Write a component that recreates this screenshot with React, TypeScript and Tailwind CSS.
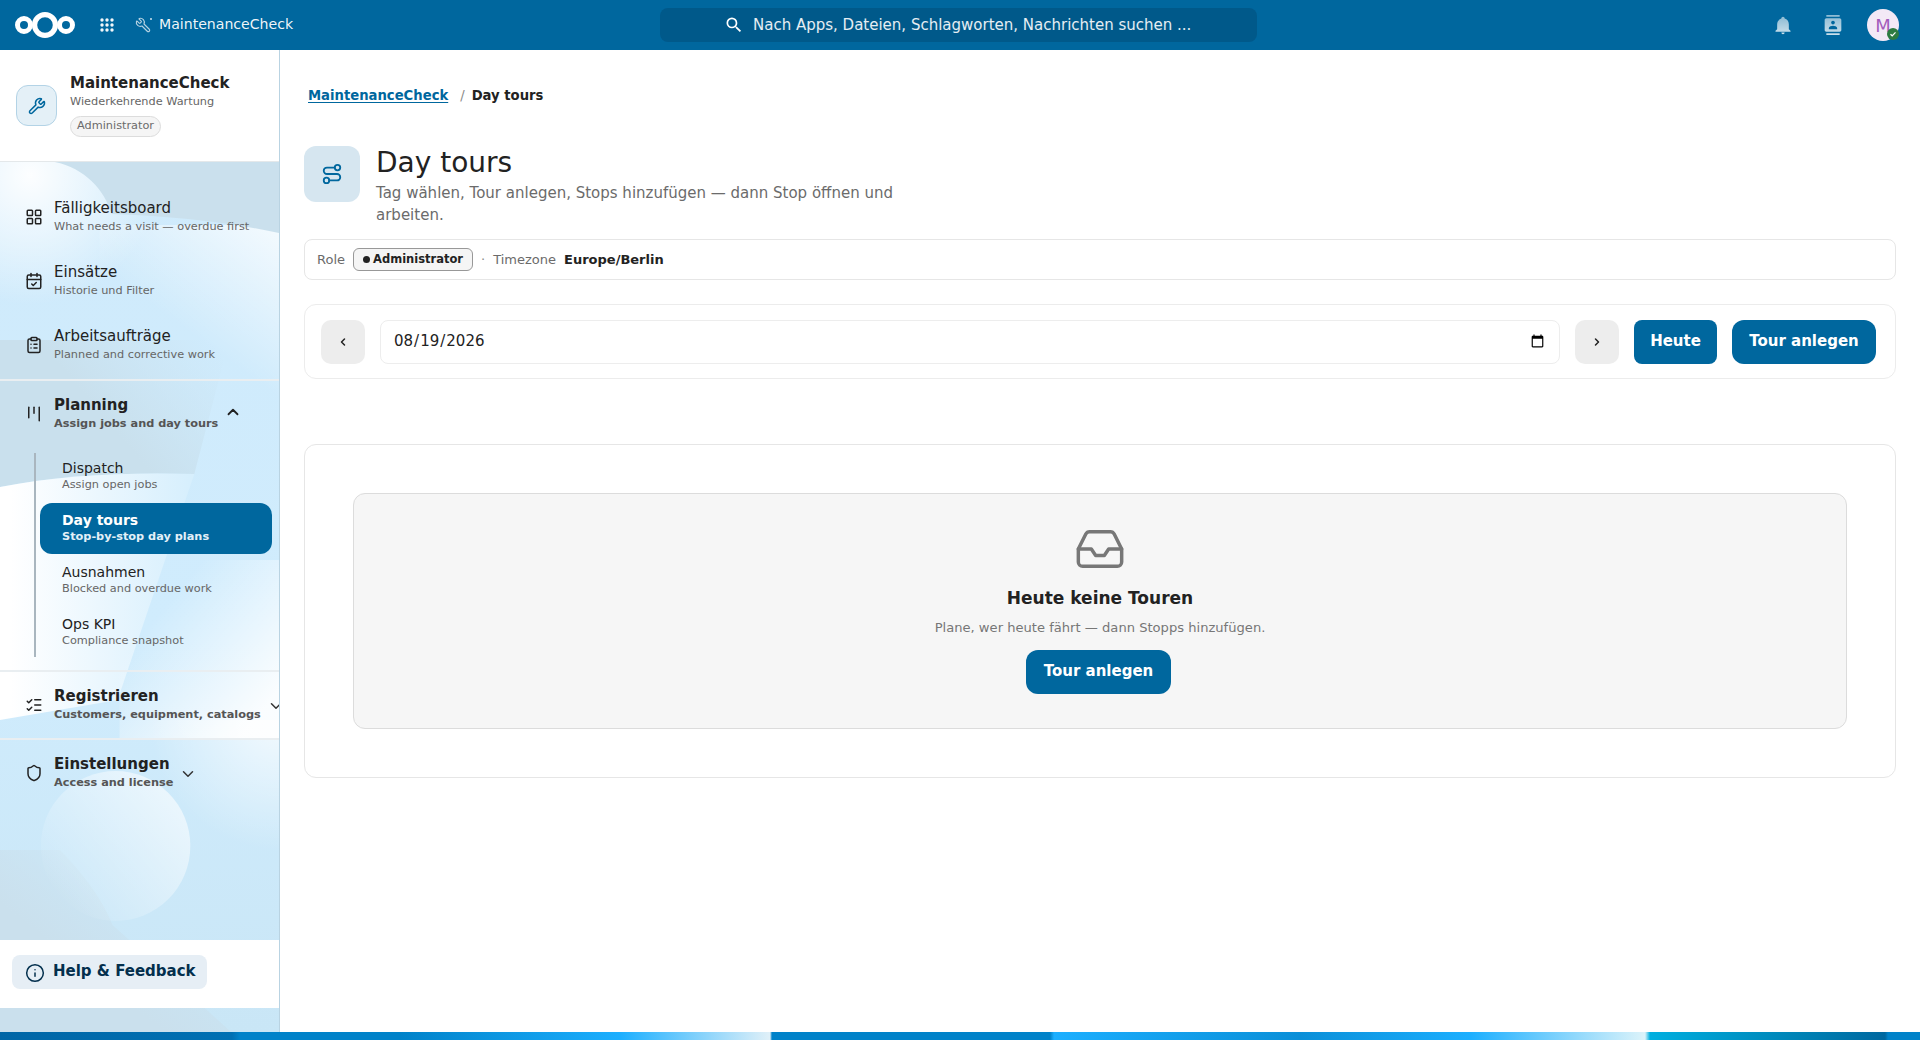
import React from "react";
import {
  LayoutGrid, CalendarCheck, ClipboardList, Kanban, ListChecks, Shield, ChevronUp, ChevronDown,
  Info, Route, Inbox, Wrench, ChevronLeft, ChevronRight,
} from "lucide-react";

function SidebarBackdrop() {
  return (
    <svg className="absolute inset-0 w-full h-full" viewBox="0 50 280 982" preserveAspectRatio="none" aria-hidden="true">
      <defs>
        <linearGradient id="base" x1="0" y1="0" x2="0" y2="1">
          <stop offset="0" stopColor="#cfeafb" />
          <stop offset="0.6" stopColor="#d0ecfd" />
          <stop offset="1" stopColor="#c9e6f6" />
        </linearGradient>
        <radialGradient id="blobA" gradientUnits="userSpaceOnUse" cx="30" cy="175" r="130">
          <stop offset="0" stopColor="#ffffff" stopOpacity="0.95" />
          <stop offset="0.6" stopColor="#ffffff" stopOpacity="0.4" />
          <stop offset="1" stopColor="#ffffff" stopOpacity="0" />
        </radialGradient>
        <linearGradient id="glowR" gradientUnits="userSpaceOnUse" x1="280" y1="230" x2="200" y2="340">
          <stop offset="0" stopColor="#ffffff" stopOpacity="0.75" />
          <stop offset="1" stopColor="#ffffff" stopOpacity="0" />
        </linearGradient>
        <linearGradient id="darkB" gradientUnits="userSpaceOnUse" x1="215" y1="345" x2="115" y2="430">
          <stop offset="0" stopColor="#c9e2f0" stopOpacity="0" />
          <stop offset="1" stopColor="#c9e0ed" stopOpacity="1" />
        </linearGradient>
        <linearGradient id="whiteL" gradientUnits="userSpaceOnUse" x1="10" y1="560" x2="190" y2="560">
          <stop offset="0" stopColor="#ffffff" />
          <stop offset="1" stopColor="#d7effd" />
        </linearGradient>
        <linearGradient id="whiteR" gradientUnits="userSpaceOnUse" x1="170" y1="600" x2="280" y2="690">
          <stop offset="0" stopColor="#ffffff" stopOpacity="0" />
          <stop offset="1" stopColor="#ffffff" stopOpacity="0.9" />
        </linearGradient>
        <linearGradient id="circleG" gradientUnits="userSpaceOnUse" x1="60" y1="900" x2="190" y2="790">
          <stop offset="0" stopColor="#ffffff" stopOpacity="0" />
          <stop offset="1" stopColor="#ffffff" stopOpacity="0.65" />
        </linearGradient>
        <radialGradient id="topR" gradientUnits="userSpaceOnUse" cx="280" cy="720" r="130">
          <stop offset="0" stopColor="#ffffff" stopOpacity="0.75" />
          <stop offset="1" stopColor="#ffffff" stopOpacity="0" />
        </radialGradient>
        <linearGradient id="bottomD" gradientUnits="userSpaceOnUse" x1="130" y1="860" x2="60" y2="950">
          <stop offset="0" stopColor="#cae0ed" stopOpacity="0" />
          <stop offset="1" stopColor="#cae0ed" stopOpacity="1" />
        </linearGradient>
      </defs>
      <rect x="0" y="50" width="280" height="982" fill="url(#base)" />
      <rect x="0" y="50" width="280" height="330" fill="url(#blobA)" />
      <rect x="100" y="225" width="180" height="180" fill="url(#glowR)" />
      <path d="M55 162 C85 168 105 190 112 214 C170 216 230 222 280 233 L280 162 Z" fill="#cae0ed" />
      <path d="M0 340 L230 340 L195 474 C130 472 60 475 0 487 Z" fill="url(#darkB)" />
      <path d="M0 487 C60 475 130 472 195 474 L118 700 L0 720 Z" fill="url(#whiteL)" />
      <rect x="120" y="560" width="160" height="180" fill="url(#whiteR)" />
      <rect x="150" y="720" width="130" height="130" fill="url(#topR)" />
      <path d="M0 850 L60 850 C90 880 105 905 113 925 L232 1032 L0 1032 Z" fill="url(#bottomD)" />
      <circle cx="116" cy="846" r="75" fill="url(#circleG)" />
    </svg>
  );
}

const GradIcon = ({ id, d }: { id: string; d: string }) => (
  <svg width="20" height="20" viewBox="0 0 24 24" aria-hidden="true">
    <defs>
      <linearGradient id={id} x1="0" y1="0" x2="0" y2="1">
        <stop offset="0" stopColor="#ffffff" stopOpacity="0.55" />
        <stop offset="1" stopColor="#ffffff" stopOpacity="0.8" />
      </linearGradient>
    </defs>
    <path d={d} fill={`url(#${id})`} />
  </svg>
);

function Header() {
  return (
    <header className="h-[50px] shrink-0 bg-[#00679e] flex items-center text-white relative">
      <svg className="ml-[15px]" width="60" height="28" viewBox="0 0 60 28" aria-hidden="true">
        <circle cx="9" cy="14" r="6.5" fill="none" stroke="#fff" strokeWidth="5" />
        <circle cx="30" cy="14" r="10.4" fill="none" stroke="#fff" strokeWidth="5.2" />
        <circle cx="51" cy="14" r="6.5" fill="none" stroke="#fff" strokeWidth="5" />
      </svg>
      <svg className="ml-[25px]" width="14" height="14" viewBox="0 0 14 14" fill="#fff" fillOpacity="0.95" aria-hidden="true">
        {[2, 7, 12].map((y) => [2, 7, 12].map((x) => <circle key={`${x}-${y}`} cx={x} cy={y} r="1.7" />))}
      </svg>
      <div className="ml-[21px] relative w-[17px] h-[17px]">
        <Wrench size={16} strokeWidth={1.7} className="text-white/70 -scale-x-100" />
        <span className="absolute right-0 top-[1px] w-[2px] h-[2px] bg-white/80 rounded-full" />
      </div>
      <span className="ml-[7px] text-[14.1px] text-white/95">MaintenanceCheck</span>
      <div className="absolute left-[660px] top-[8px] w-[597px] h-[34px] rounded-lg bg-[#00598a] flex items-center pl-[64px] text-[15px] text-white/90">
        <svg width="20" height="20" viewBox="0 0 24 24" fill="#fff" className="mr-[9px]" aria-hidden="true">
          <path d="M9.5 3A6.5 6.5 0 0 1 16 9.5c0 1.61-.59 3.09-1.56 4.23l.27.27h.79l5 5-1.5 1.5-5-5v-.79l-.27-.27A6.516 6.516 0 0 1 9.5 16 6.5 6.5 0 0 1 3 9.5 6.5 6.5 0 0 1 9.5 3m0 2C7 5 5 7 5 9.5S7 14 9.5 14 14 12 14 9.5 12 5 9.5 5z" />
        </svg>
        <span>Nach Apps, Dateien, Schlagworten, Nachrichten suchen ...</span>
      </div>
      <div className="ml-auto flex items-center">
        <GradIcon id="bellG" d="M21 19v1H3v-1l2-2v-6c0-3.1 2-5.8 5-6.7V4a2 2 0 1 1 4 0v.3c3 .9 5 3.6 5 6.7v6zm-7 2a2 2 0 1 1-4 0" />
        <div className="ml-[30px]">
          <GradIcon id="contactG" d="M20 0H4v2h16V0zM4 24h16v-2H4v2zM20 4H4c-1.1 0-2 .9-2 2v12c0 1.1.9 2 2 2h16c1.1 0 2-.9 2-2V6c0-1.1-.9-2-2-2zm-8 2.75c1.24 0 2.25 1.01 2.25 2.25s-1.01 2.25-2.25 2.25S9.75 10.24 9.75 9 10.76 6.75 12 6.75zM17 17H7v-1.5c0-1.67 3.33-2.5 5-2.5s5 .83 5 2.5V17z" />
        </div>
        <div className="ml-[24px] mr-[21px] relative w-8 h-8 rounded-full bg-[#f3e9f6] flex items-center justify-center text-[#a35cbc] text-[18px]">
          M
          <span className="absolute right-0 bottom-[1px] w-[12px] h-[12px] rounded-full bg-[#2d7b41] flex items-center justify-center">
            <svg width="8" height="8" viewBox="0 0 8 8" aria-hidden="true"><path d="M1.5 4.2 3.2 5.8 6.5 2.4" fill="none" stroke="#fff" strokeWidth="1.2" /></svg>
          </span>
        </div>
      </div>
    </header>
  );
}

const TopItem = ({ icon, title, sub }: { icon: React.ReactNode; title: string; sub: string }) => (
  <div className="h-16 flex items-center pl-[25px] gap-[11px]">
    <span className="w-[18px] flex justify-center text-[#222]">{icon}</span>
    <div>
      <div className="text-[15px] leading-[20px] text-[#222]">{title}</div>
      <div className="text-[11.3px] leading-[18px] text-[#666]">{sub}</div>
    </div>
  </div>
);

const Section = ({ icon, title, sub, open }: { icon: React.ReactNode; title: string; sub: string; open?: boolean }) => (
  <div className="h-[66px] flex items-center pl-[25px] gap-[11px] overflow-hidden">
    <span className="w-[18px] shrink-0 flex justify-center text-[#222]">{icon}</span>
    <div className="shrink-0">
      <div className="text-[15px] leading-[20px] font-bold text-[#222]">{title}</div>
      <div className="text-[11.3px] leading-[18px] font-bold text-[#555]">{sub}</div>
    </div>
    <span className={open ? "shrink-0 ml-[-5px] text-[#222] mt-[-4px]" : "shrink-0 ml-[-5px] text-[#333] mt-[2px]"}>
      {open ? <ChevronUp size={18} strokeWidth={2.4} /> : <ChevronDown size={18} strokeWidth={2} />}
    </span>
  </div>
);

const SubItem = ({ title, sub, active }: { title: string; sub: string; active?: boolean }) => (
  <div className={active ? "h-[51px] ml-[40px] mr-[7px] pl-[22px] pt-2 rounded-[12px] bg-[#00679e] text-white" : "h-[52px] ml-[40px] mr-[7px] pl-[22px] pt-2"}>
    <div className={active ? "text-[14px] leading-[18px] font-bold" : "text-[14px] leading-[18px] text-[#222]"}>{title}</div>
    <div className={active ? "text-[11.3px] leading-[16px] font-bold text-[#e3f0f8]" : "text-[11.3px] leading-[16px] text-[#666]"}>{sub}</div>
  </div>
);

const Divider = () => <div className="h-[2px] bg-[#e9eef1]" />;

function Sidebar() {
  return (
    <aside className="relative w-[280px] shrink-0 border-r border-[#b9d3e2] flex flex-col">
      <SidebarBackdrop />
      <div className="relative h-[112px] bg-white border-b border-[#e4e8ea] flex items-start pl-4 gap-[13px] pt-[23px]">
        <div className="mt-[12px] w-[41px] h-[41px] rounded-[12px] bg-[#e4f0f7] border border-[#b3d3e6] flex items-center justify-center text-[#00679e]">
          <Wrench size={18} strokeWidth={2} />
        </div>
        <div>
          <div className="text-[15px] leading-[20px] font-bold text-[#222]">MaintenanceCheck</div>
          <div className="text-[11.3px] leading-[16px] mt-[1px] text-[#666]">Wiederkehrende Wartung</div>
          <div className="mt-[6px] inline-flex items-center h-[21px] px-[6px] rounded-full bg-[#f5f5f5] border border-[#dcdcdc] text-[11.3px] text-[#6b6b6b]">Administrator</div>
        </div>
      </div>
      <nav className="relative flex-1 pt-[23px]">
        <TopItem icon={<LayoutGrid size={18} />} title="Fälligkeitsboard" sub="What needs a visit — overdue first" />
        <TopItem icon={<CalendarCheck size={18} />} title="Einsätze" sub="Historie und Filter" />
        <TopItem icon={<ClipboardList size={18} />} title="Arbeitsaufträge" sub="Planned and corrective work" />
        <div className="mt-[2px]"><Divider /></div>
        <Section icon={<Kanban size={18} />} title="Planning" sub="Assign jobs and day tours" open />
        <div className="relative mt-[4px] pb-[11px]">
          <span className="absolute left-[34px] top-[2px] bottom-[13px] w-[2px] bg-[#a9b6bf]" />
          <SubItem title="Dispatch" sub="Assign open jobs" />
          <SubItem title="Day tours" sub="Stop-by-stop day plans" active />
          <div className="h-[1px]" />
          <SubItem title="Ausnahmen" sub="Blocked and overdue work" />
          <SubItem title="Ops KPI" sub="Compliance snapshot" />
        </div>
        <Divider />
        <Section icon={<ListChecks size={18} />} title="Registrieren" sub="Customers, equipment, catalogs" />
        <Divider />
        <Section icon={<Shield size={18} />} title="Einstellungen" sub="Access and license" />
      </nav>
      <div className="relative h-[68px] bg-white pl-3 pt-[15px]">
        <div className="w-[195px] h-[34px] rounded-lg bg-[#e6eef5] flex items-center pl-[13px] gap-[8px] text-[#032f4d]">
          <Info size={20} strokeWidth={1.8} className="mt-[2px]" />
          <span className="text-[15px] font-bold leading-[20px] mt-[-2px]">Help &amp; Feedback</span>
        </div>
      </div>
      <div className="relative h-6" />
    </aside>
  );
}

const btnPrimary = "h-11 pb-[2px] bg-[#00679e] text-white font-bold text-[15px] flex items-center justify-center";

function Main() {
  return (
    <main className="flex-1 min-w-0 bg-white pl-[24px] pr-[24px] pt-[36px] text-[#222]">
      <div className="ml-1 h-5 flex items-center text-[13.2px] font-bold">
        <span className="text-[#00679e] underline underline-offset-2">MaintenanceCheck</span>
        <span className="ml-3 font-normal text-[#8a8a8a]">/</span>
        <span className="ml-[7px]">Day tours</span>
      </div>
      <div className="mt-10 flex gap-4">
        <div className="w-14 h-14 rounded-[12px] bg-[#d6e6f0] flex items-center justify-center text-[#00679e]">
          <Route size={22} strokeWidth={2} />
        </div>
        <div>
          <h1 className="text-[28px] leading-[34px] font-normal">Day tours</h1>
          <p className="mt-[2px] w-[540px] text-[15px] leading-[22px] text-[#6b6b6b]">Tag wählen, Tour anlegen, Stops hinzufügen — dann Stop öffnen und arbeiten.</p>
        </div>
      </div>
      <div className="mt-[13px] h-[41px] rounded-lg border border-[#e6e6e6] flex items-center pl-3 text-[13px]">
        <span className="text-[#6b6b6b]">Role</span>
        <span className="ml-2 h-[23px] px-[9px] rounded-md bg-[#f5f5f5] border border-[#989898] flex items-center gap-[3px] text-[11.5px] font-bold">
          <span className="w-[7px] h-[7px] rounded-full bg-[#222]" />Administrator
        </span>
        <span className="ml-2 text-[#8a8a8a]">·</span>
        <span className="ml-2 text-[#6b6b6b]">Timezone</span>
        <span className="ml-2 font-bold">Europe/Berlin</span>
      </div>
      <div className="mt-[24px] h-[75px] rounded-[12px] border border-[#ececec] flex items-start pl-4 pr-[19px] pt-[15px] gap-[15px]">
        <button className="w-11 h-11 shrink-0 rounded-[10px] bg-[#ededed] flex items-center justify-center text-[#222]"><ChevronLeft size={12} strokeWidth={3} /></button>
        <input type="date" defaultValue="2026-08-19" className="flex-1 min-w-0 h-11 pb-[2px] rounded-lg border border-[#ededed] bg-white pl-[12px] pr-[12px] text-[15px] text-[#222]" />
        <button className="w-11 h-11 shrink-0 rounded-[10px] bg-[#ededed] flex items-center justify-center text-[#222]"><ChevronRight size={12} strokeWidth={3} /></button>
        <button className={`${btnPrimary} w-[83px] rounded-lg`}>Heute</button>
        <button className={`${btnPrimary} w-[144px] rounded-[12px]`}>Tour anlegen</button>
      </div>
      <div className="mt-[65px] rounded-[12px] border border-[#e6e6e6] p-[48px]">
        <div className="h-[236px] rounded-[12px] border border-[#dcdcdc] bg-[#f6f6f6] flex flex-col items-center pt-[29px]">
          <Inbox size={52} strokeWidth={1.6} className="text-[#777]" />
          <div className="mt-[11px] text-[17px] leading-[24px] font-bold">Heute keine Touren</div>
          <div className="mt-[9px] text-[13.1px] leading-[18px] text-[#777]">Plane, wer heute fährt — dann Stopps hinzufügen.</div>
          <button className={`${btnPrimary} mt-[13px] mr-[3px] w-[145px] rounded-[12px]`}>Tour anlegen</button>
        </div>
      </div>
    </main>
  );
}

export default function App() {
  return (
    <div className="h-[1040px] w-[1920px] overflow-hidden flex flex-col bg-white [font-family:'DejaVu_Sans',sans-serif]">
      <Header />
      <div className="flex-1 min-h-0 flex">
        <Sidebar />
        <Main />
      </div>
      <div className="h-2 shrink-0 bg-[linear-gradient(90deg,#0066a6_0,#0070b3_232px,#0082c9_240px,#0082c9_400px,#1cafff_620px,#e0f0f8_770px,#0082c9_772px,#0082c9_1050px,#1cafff_1054px,#0a8fd8_1300px,#1cafff_1470px,#dcf3fa_1645px,#00afe0_1650px,#0082b5_1800px,#0068a0_1885px,#0082c9_1888px,#0082c9_1920px)]" />
    </div>
  );
}
